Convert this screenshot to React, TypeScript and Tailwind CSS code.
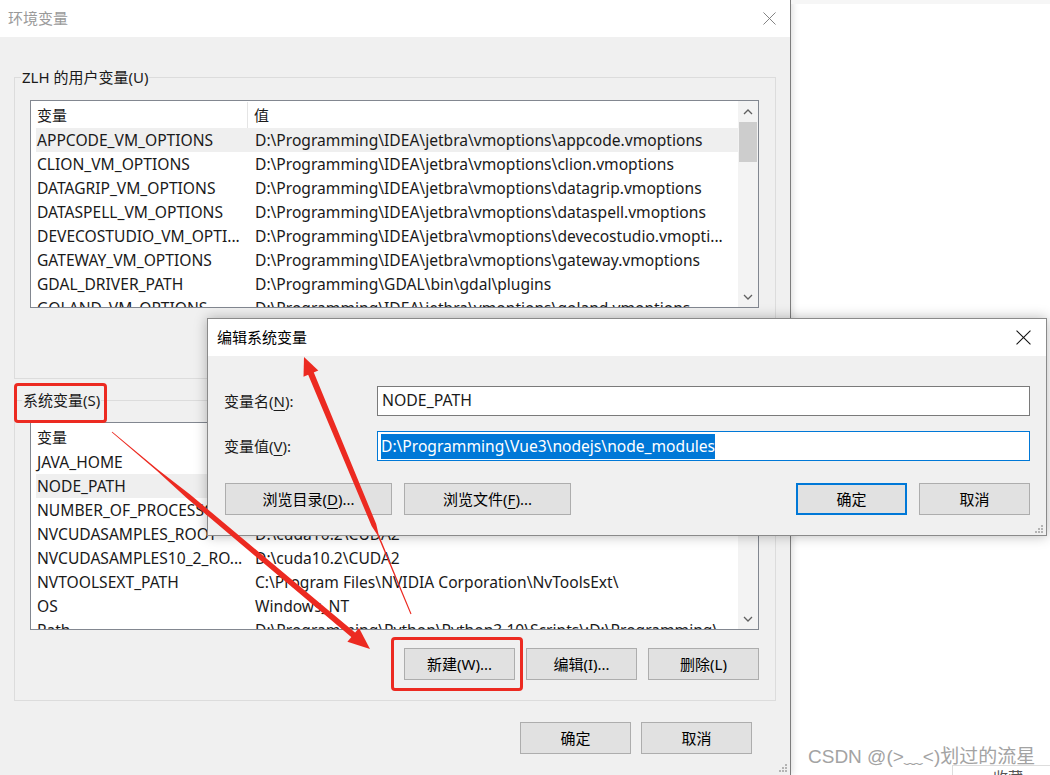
import type { ReactNode } from 'react'

const font = "font-['Noto_Sans','Noto_Sans_CJK_SC',sans-serif]"

type Row = { name: string; value: string; active?: boolean }

const userRows: Row[] = [
  { name: 'APPCODE_VM_OPTIONS', value: 'D:\\Programming\\IDEA\\jetbra\\vmoptions\\appcode.vmoptions', active: true },
  { name: 'CLION_VM_OPTIONS', value: 'D:\\Programming\\IDEA\\jetbra\\vmoptions\\clion.vmoptions' },
  { name: 'DATAGRIP_VM_OPTIONS', value: 'D:\\Programming\\IDEA\\jetbra\\vmoptions\\datagrip.vmoptions' },
  { name: 'DATASPELL_VM_OPTIONS', value: 'D:\\Programming\\IDEA\\jetbra\\vmoptions\\dataspell.vmoptions' },
  { name: 'DEVECOSTUDIO_VM_OPTI...', value: 'D:\\Programming\\IDEA\\jetbra\\vmoptions\\devecostudio.vmopti...' },
  { name: 'GATEWAY_VM_OPTIONS', value: 'D:\\Programming\\IDEA\\jetbra\\vmoptions\\gateway.vmoptions' },
  { name: 'GDAL_DRIVER_PATH', value: 'D:\\Programming\\GDAL\\bin\\gdal\\plugins' },
  { name: 'GOLAND_VM_OPTIONS', value: 'D:\\Programming\\IDEA\\jetbra\\vmoptions\\goland.vmoptions' },
]

const systemRows: Row[] = [
  { name: 'JAVA_HOME', value: 'D:\\Programming\\Java\\jdk1.8.0_301' },
  { name: 'NODE_PATH', value: 'D:\\Programming\\Vue3\\nodejs\\node_modules', active: true },
  { name: 'NUMBER_OF_PROCESSORS', value: '12' },
  { name: 'NVCUDASAMPLES_ROOT', value: 'D:\\cuda10.2\\CUDA2' },
  { name: 'NVCUDASAMPLES10_2_RO...', value: 'D:\\cuda10.2\\CUDA2' },
  { name: 'NVTOOLSEXT_PATH', value: 'C:\\Program Files\\NVIDIA Corporation\\NvToolsExt\\' },
  { name: 'OS', value: 'Windows_NT' },
  { name: 'Path', value: 'D:\\Programming\\Python\\Python3.10\\Scripts\\;D:\\Programming\\...' },
]

function Chevron({ up }: { up?: boolean }) {
  return (
    <svg width="10" height="6" viewBox="0 0 10 6">
      <path d={up ? 'M1 5 L5 1 L9 5' : 'M1 1 L5 5 L9 1'} fill="none" stroke="#606060" strokeWidth="1.3" />
    </svg>
  )
}

function CloseIcon({ size, color }: { size: number; color: string }) {
  return (
    <svg width={size} height={size} viewBox="0 0 14 14">
      <path d="M0.5 0.5 L13.5 13.5 M13.5 0.5 L0.5 13.5" stroke={color} strokeWidth="1" />
    </svg>
  )
}

function Grip() {
  return (
    <svg width="10" height="10" viewBox="0 0 10 10">
      {[
        [8, 2],
        [5, 5],
        [8, 5],
        [2, 8],
        [5, 8],
        [8, 8],
      ].map(([x, y]) => (
        <rect key={`${x}-${y}`} x={x - 1} y={y - 1} width="2" height="2" fill="#b4b4b4" />
      ))}
    </svg>
  )
}

function ListView({ rows, thumb }: { rows: Row[]; thumb?: boolean }) {
  return (
    <div className="flex h-[208px] w-[729px] overflow-hidden border border-[#828790] bg-white">
      <div className="flex-1 overflow-hidden">
        <div className="flex h-[27px] items-center pt-[1px]">
          <div className="flex h-full w-[217px] items-center border-r border-[#e5e5e5] pl-[6px]">变量</div>
          <div className="pl-[6px]">值</div>
        </div>
        {rows.map((r) => (
          <div
            key={r.name}
            className={`ml-[5px] flex h-[24px] items-center whitespace-nowrap pt-[2px] text-[15.6px] ${r.active ? 'bg-[#efefef]' : ''}`}
          >
            <div className="w-[219px] shrink-0 pl-[1px]">{r.name}</div>
            <div>{r.value}</div>
          </div>
        ))}
      </div>
      <div className="flex w-[20px] flex-col bg-[#f3f3f3]">
        <div className="flex h-[21px] items-center justify-center">
          <Chevron up />
        </div>
        {thumb && <div className="mx-[1px] h-[40px] bg-[#cdcdcd]" />}
        <div className="flex-1" />
        <div className="flex h-[21px] items-center justify-center">
          <Chevron />
        </div>
      </div>
    </div>
  )
}

function Btn({ children, w, primary }: { children: ReactNode; w: string; primary?: boolean }) {
  return (
    <button
      className={`flex h-[32px] items-center justify-center bg-[#e1e1e1] text-[15px] text-black ${w} ${
        primary ? 'border-2 border-[#0078d7]' : 'border border-[#adadad]'
      }`}
    >
      {children}
    </button>
  )
}

function U({ children }: { children: ReactNode }) {
  return <span className="underline decoration-1 underline-offset-[3px]">{children}</span>
}

export default function App() {
  return (
    <div className={`relative flex h-[775px] w-[1050px] overflow-hidden bg-white text-[15px] text-[#1a1a1a] ${font}`}>
      {/* 环境变量 window */}
      <div className="flex w-[791px] shrink-0 flex-col border-r border-[#7d7d7d] shadow-[2px_0_6px_rgba(0,0,0,0.12)]">
        <div className="flex h-[37px] items-center justify-between bg-white pl-[8px] pr-[14px]">
          <span className="text-[#9a9a9a]">环境变量</span>
          <CloseIcon size={13} color="#7a7a7a" />
        </div>
        <div className="flex flex-1 flex-col bg-[#f0f0f0] px-[14px] pt-[30px]">
          <fieldset className="border border-[#dcdcdc] px-[15px] pb-[70px] pt-[13px]">
            <legend className="ml-[-9px] px-[1px] leading-[20px]">ZLH 的用户变量(U)</legend>
            <ListView rows={userRows} thumb />
          </fieldset>

          <fieldset className="mt-[11px] border border-[#dcdcdc] px-[15px] pb-[20px] pt-[12px]">
            <legend className="ml-[-8px] px-[1px] leading-[20px]">系统变量(S)</legend>
            <ListView rows={systemRows} />
            <div className="mt-[18px] flex w-[729px] justify-end gap-[11px]">
              <Btn w="w-[111px]">新建(W)...</Btn>
              <Btn w="w-[111px]">编辑(I)...</Btn>
              <Btn w="w-[111px]">删除(L)</Btn>
            </div>
          </fieldset>

          <div className="mt-[21px] flex justify-end gap-[10px] pr-[24px]">
            <Btn w="w-[111px]">确定</Btn>
            <Btn w="w-[111px]">取消</Btn>
          </div>
          <div className="mr-[-12px] mt-auto flex justify-end pb-[2px]">
            <Grip />
          </div>
        </div>
      </div>

      {/* page behind */}
      <div className="flex flex-1 flex-col border-t-[4px] border-[#f6f6f6]">
        <div className="flex-1" />
        <div className="ml-[17px] whitespace-nowrap font-['Liberation_Sans','Noto_Sans_CJK_SC',sans-serif] text-[19px] leading-[22px] text-[#a3a3a3]">
          CSDN @(&gt;﹏&lt;)划过的流星
        </div>
        <div className="ml-[161px] mt-[-3px] h-[10px] overflow-hidden border-l border-t border-[#dddddd] pl-[40px] text-[15px] leading-[22px] text-[#555]">
          收藏
        </div>
      </div>

      {/* 编辑系统变量 dialog */}
      <div className="absolute left-[207px] top-[318px] flex h-[218px] w-[840px] flex-col border border-[#8a8a8a] bg-[#f0f0f0] shadow-[0_0_12px_rgba(0,0,0,0.28)]">
        <div className="flex h-[37px] shrink-0 items-center justify-between bg-white pl-[9px] pr-[15px]">
          <span className="text-black">编辑系统变量</span>
          <CloseIcon size={15} color="#111" />
        </div>
        <div className="flex flex-1 flex-col pl-[16px] pr-[16px] pt-[30px]">
          <div className="flex h-[30px] items-center">
            <div className="w-[153px] shrink-0">
              变量名(<U>N</U>):
            </div>
            <div className="flex h-full flex-1 items-center border border-[#7a7a7a] bg-white pl-[4px] text-[15.8px]">
              NODE_PATH
            </div>
          </div>
          <div className="mt-[15px] flex h-[30px] items-center">
            <div className="w-[153px] shrink-0">
              变量值(<U>V</U>):
            </div>
            <div className="flex h-full flex-1 items-center border border-[#0078d7] bg-white pl-[3px] text-[15.6px]">
              <span className="bg-[#0078d7] leading-[25px] text-white">D:\Programming\Vue3\nodejs\node_modules</span>
            </div>
          </div>
          <div className="ml-[1px] mt-[22px] flex gap-[12px]">
            <Btn w="w-[167px]">
              浏览目录(<U>D</U>)...
            </Btn>
            <Btn w="w-[167px]">
              浏览文件(<U>F</U>)...
            </Btn>
            <div className="flex-1" />
            <Btn w="w-[111px]" primary>
              确定
            </Btn>
            <Btn w="w-[111px]">取消</Btn>
          </div>
          <div className="mr-[-14px] mt-auto flex justify-end pb-[1px]">
            <Grip />
          </div>
        </div>
      </div>

      {/* red annotations */}
      <div className="absolute left-[14px] top-[383px] h-[40px] w-[93px] rounded-[4px] border-[3px] border-[#ec2a21]" />
      <div className="absolute left-[391px] top-[637px] h-[54px] w-[132px] rounded-[4px] border-[3px] border-[#ec2a21]" />
      <svg className="pointer-events-none absolute left-0 top-0" width="1050" height="775" viewBox="0 0 1050 775">
        <g fill="#ec2a21">
          <polygon points="304,357 303.5,376.7 318.3,370.5" />
          <polygon points="307,372 371.6,526 377.1,534.5 410.5,614.2 411.5,613.8 378.5,533.9 376.2,524 312.6,369.6" />
          <polygon points="370,649 347.4,641.7 359,627.9" />
          <polygon points="111.7,432.3 157.4,471.2 186.9,498.3 353.6,639.1 357.4,634.5 190.1,494.5 158.4,470 112.3,431.7" />
        </g>
      </svg>
    </div>
  )
}
